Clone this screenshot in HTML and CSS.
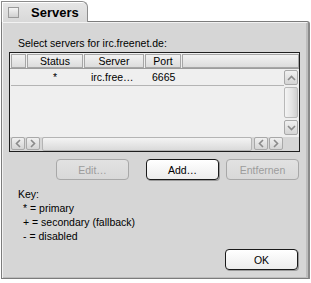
FILE: index.html
```html
<!DOCTYPE html>
<html lang="de">
<head>
    <meta charset="UTF-8">
    <title>Servers</title>
    <link rel="stylesheet" href="styles.css">
</head>
<body>
    <div class="tab">
        <span class="tab-check"></span>
        <span class="tab-title">Servers</span>
    </div>
    <div class="panel">
        <div class="intro">Select servers for irc.freenet.de:</div>

        <div class="list">
            <div class="list-head">
                <div class="hcell c0"></div>
                <div class="hcell c1">Status</div>
                <div class="hcell c2">Server</div>
                <div class="hcell c3">Port</div>
                <div class="hcell c4"></div>
            </div>
            <div class="list-body">
                <div class="rows">
                    <div class="row">
                        <div class="cell c0"></div>
                        <div class="cell c1 center">*</div>
                        <div class="cell c2">irc.free…</div>
                        <div class="cell c3">6665</div>
                    </div>
                </div>
                <div class="vscroll">
                    <div class="sbtn">
                        <svg width="9" height="6" viewBox="0 0 9 6"><path d="M1 5 L4.5 1.5 L8 5" fill="none" stroke="#8a8a8a" stroke-width="1.6"/></svg>
                    </div>
                    <div class="vthumb"></div>
                    <div class="sbtn">
                        <svg width="9" height="6" viewBox="0 0 9 6"><path d="M1 1 L4.5 4.5 L8 1" fill="none" stroke="#8a8a8a" stroke-width="1.6"/></svg>
                    </div>
                </div>
            </div>
            <div class="hscroll">
                <div class="sbtn">
                    <svg width="6" height="9" viewBox="0 0 6 9"><path d="M5 1 L1.5 4.5 L5 8" fill="none" stroke="#8a8a8a" stroke-width="1.6"/></svg>
                </div>
                <div class="sbtn">
                    <svg width="6" height="9" viewBox="0 0 6 9"><path d="M1 1 L4.5 4.5 L1 8" fill="none" stroke="#8a8a8a" stroke-width="1.6"/></svg>
                </div>
                <div class="htrack"></div>
                <div class="sbtn">
                    <svg width="6" height="9" viewBox="0 0 6 9"><path d="M5 1 L1.5 4.5 L5 8" fill="none" stroke="#8a8a8a" stroke-width="1.6"/></svg>
                </div>
                <div class="sbtn">
                    <svg width="6" height="9" viewBox="0 0 6 9"><path d="M1 1 L4.5 4.5 L1 8" fill="none" stroke="#8a8a8a" stroke-width="1.6"/></svg>
                </div>
                <div class="corner"></div>
            </div>
        </div>

        <div class="actions">
            <button class="btn" disabled>Edit…</button>
            <button class="btn btn-default">Add…</button>
            <button class="btn" disabled>Entfernen</button>
        </div>

        <div class="key">
            <div>Key:</div>
            <div class="key-item">* = primary</div>
            <div class="key-item">+ = secondary (fallback)</div>
            <div class="key-item">- = disabled</div>
        </div>

        <div class="footer">
            <button class="btn btn-ok">OK</button>
        </div>
    </div>
</body>
</html>
```

FILE: styles.css
```css
* {
    margin: 0;
    padding: 0;
    box-sizing: border-box;
}

body {
    font-family: 'Liberation Sans', Arial, sans-serif;
    font-size: 10.5px;
    color: #000;
    background: #fff;
    width: 311px;
    height: 283px;
    overflow: hidden;
}

.tab {
    display: flex;
    align-items: center;
    margin: 1px 0 0 1px;
    width: 87px;
    height: 21px;
    padding-left: 6px;
    background: linear-gradient(#e6e6e6, #d8d8d8);
    border: 1px solid #8c8c8c;
    border-bottom: none;
    border-top-right-radius: 6px;
    box-shadow: inset 1px 1px 0 #fff;
    position: relative;
    z-index: 1;
}

.tab-check {
    width: 11px;
    height: 11px;
    border: 1px solid #9a9a9a;
    background: linear-gradient(#f4f4f4, #d0d0d0);
    margin-right: 12px;
}

.tab-title {
    font-weight: bold;
    font-size: 13px;
}

.panel {
    margin: -1px 0 0 1px;
    width: 309px;
    height: 258px;
    background: #d6d6d6;
    border: 1px solid #7c7c7c;
    border-right: 2px solid #8a8a8a;
    border-top-right-radius: 3px;
    box-shadow: inset 1px 1px 0 #f2f2f2, inset -2px -1px 0 #bdbdbd;
    padding: 14px 0 0 7px;
}

.intro {
    padding-left: 9px;
    line-height: 14px;
    margin-bottom: 2px;
}

.list {
    width: 291px;
    height: 100px;
    border: 1px solid #1e1e1e;
    background: #efefef;
    display: flex;
    flex-direction: column;
}

.list-head {
    display: flex;
    height: 16px;
    padding: 1px 0 0 1px;
    border-bottom: 1px solid #9c9c9c;
}

.hcell {
    height: 14px;
    line-height: 13px;
    text-align: center;
    background: linear-gradient(#f2f2f2, #dcdcdc);
    border: 1px solid #a6a6a6;
    margin-right: 1px;
}

.c0 { width: 15px; }
.c1 { width: 56px; }
.c2 { width: 60px; }
.c3 { width: 36px; }
.c4 { flex: 1; margin-right: 0; }

.list-body {
    display: flex;
    flex: 1;
}

.rows {
    flex: 1;
    padding-left: 1px;
}

.row {
    display: flex;
    height: 17px;
    line-height: 16px;
    border-bottom: 1px solid #b4b4b4;
}

.cell {
    margin-right: 1px;
    padding-left: 7px;
}

.cell.center {
    text-align: center;
    padding-left: 0;
}

.vscroll {
    width: 15px;
    display: flex;
    flex-direction: column;
    padding: 1px 1px 0 0;
    gap: 2px;
}

.sbtn {
    width: 14px;
    height: 15px;
    display: flex;
    align-items: center;
    justify-content: center;
    background: linear-gradient(#f0f0f0, #d4d4d4);
    border: 1px solid #a8a8a8;
    border-radius: 2px;
}

.vthumb {
    height: 31px;
    background: linear-gradient(90deg, #f4f4f4, #e2e2e2 60%, #cfcfcf);
    border: 1px solid #b8b8b8;
    border-radius: 2px;
}

.hscroll {
    display: flex;
    height: 14px;
    padding-left: 1px;
    gap: 1px;
    background: #d6d6d6;
}

.hscroll .sbtn {
    height: 13px;
}

.htrack {
    flex: 1;
    margin: 0 1px;
    background: linear-gradient(#f4f4f4, #dadada);
    border: 1px solid #b4b4b4;
    border-radius: 2px;
}

.corner {
    width: 15px;
    background: #d6d6d6;
}

.actions {
    display: flex;
    margin: 7px 0 0 47px;
}

.btn {
    font-family: inherit;
    font-size: 10.5px;
    width: 73px;
    height: 21px;
    border: 1px solid #1a1a1a;
    border-radius: 4px;
    background: linear-gradient(#ffffff, #ececec);
    color: #000;
    box-shadow: 1px 1px 0 #9a9a9a;
}

.btn:disabled {
    border-color: #a8a8a8;
    color: #9c9c9c;
    background: linear-gradient(#e2e2e2, #d8d8d8);
    box-shadow: none;
}

.btn-default {
    margin: 0 7px 0 17px;
}

.key {
    margin-top: 7px;
    padding-left: 9px;
    line-height: 14px;
}

.key-item {
    padding-left: 5px;
}

.footer {
    display: flex;
    justify-content: flex-end;
    margin: 6px 10px 0 0;
}
```
